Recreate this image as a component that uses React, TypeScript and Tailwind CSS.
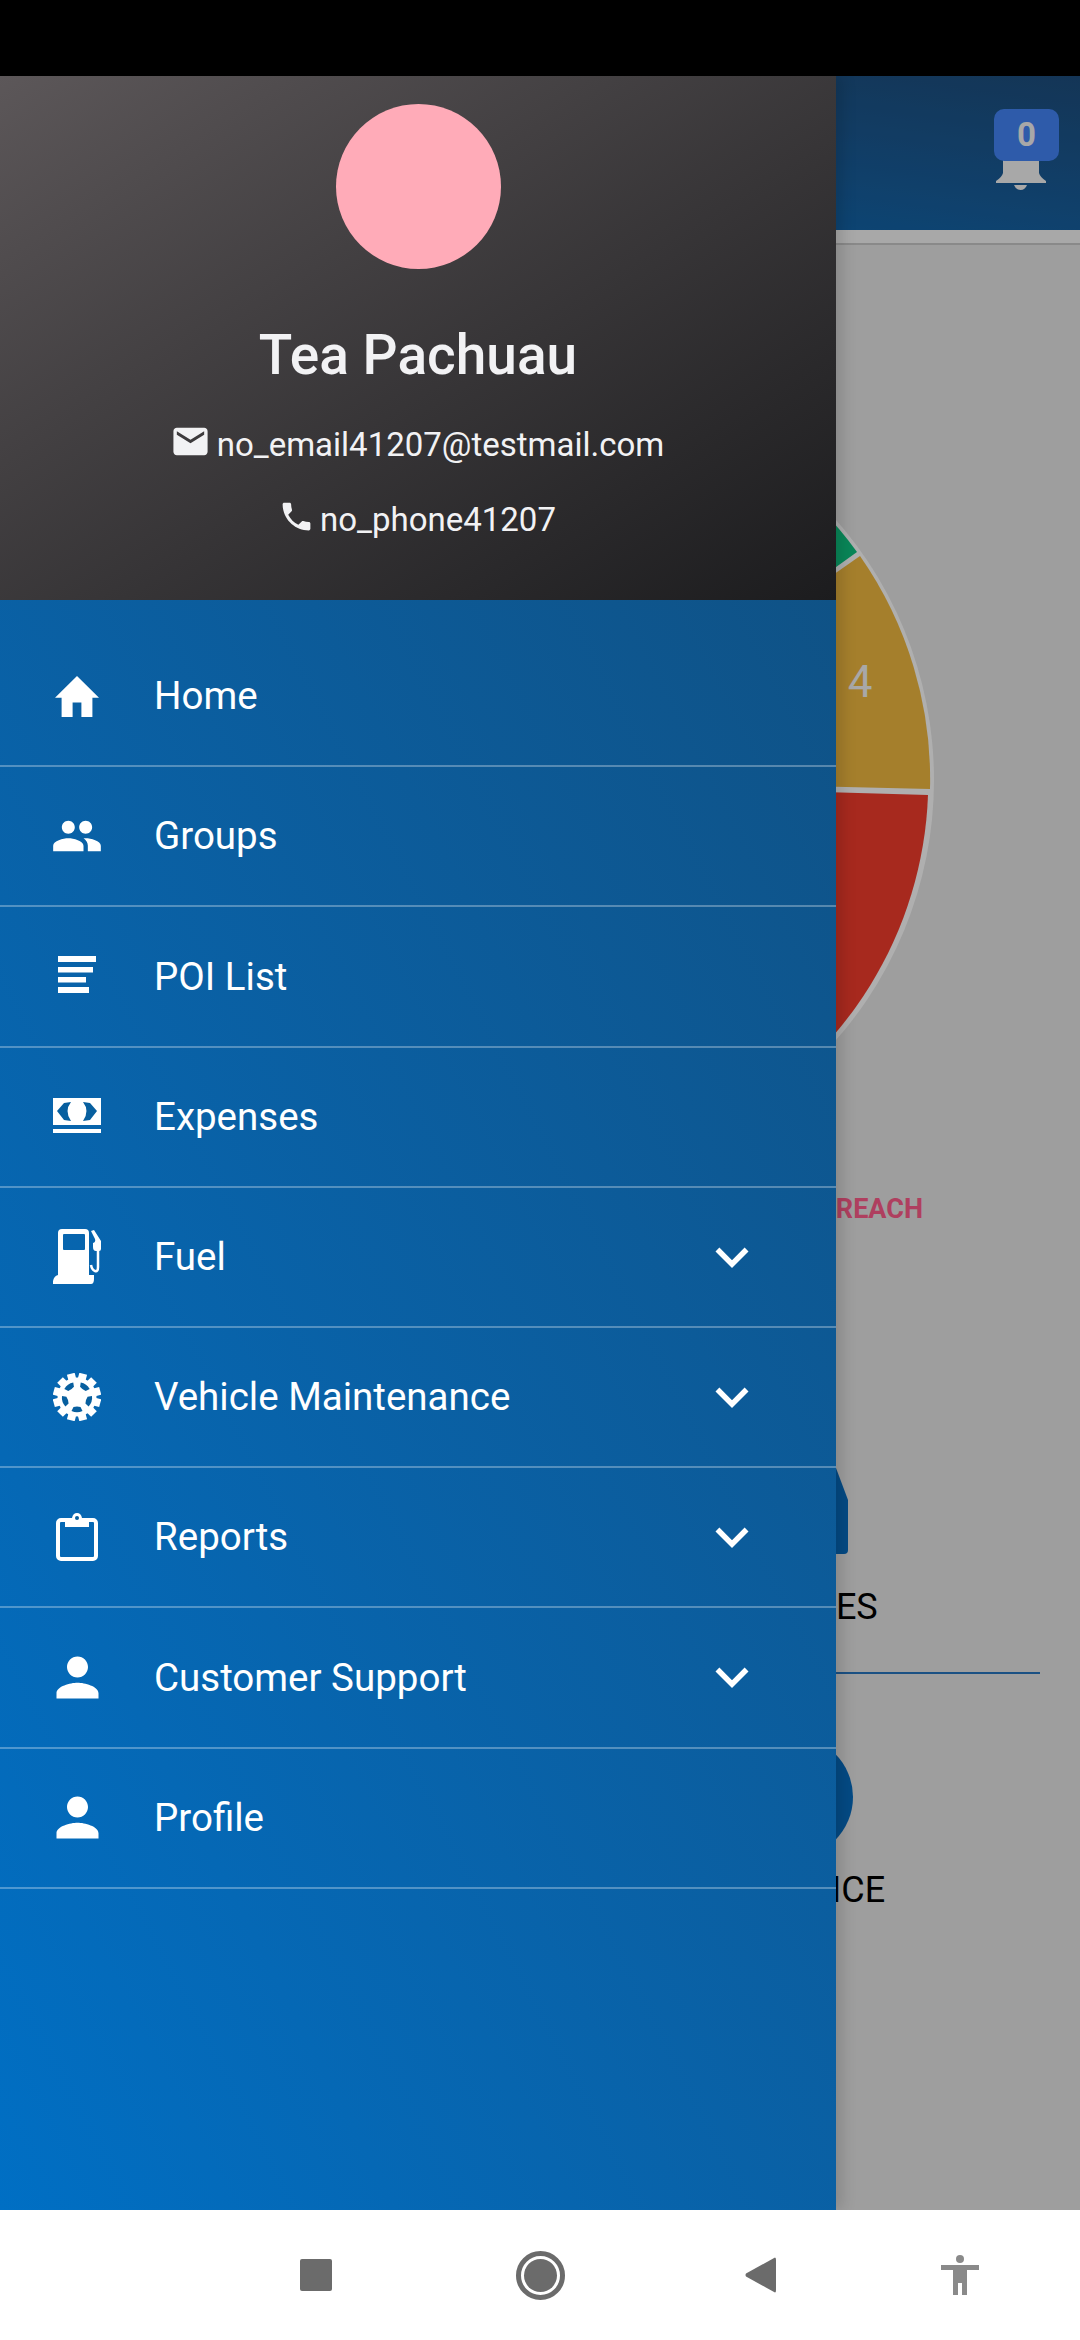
import { MdEmail, MdPhone, MdPeople, MdPerson, MdKeyboardArrowDown } from 'react-icons/md';
import type { ReactNode } from 'react';

const HomeIcon = () => (
  <svg width="44" height="41" viewBox="2 3 20 17" preserveAspectRatio="none" fill="white">
    <path d="M10 20v-6h4v6h5v-8h3L12 3 2 12h3v8z" />
  </svg>
);

const ListIcon = () => (
  <svg width="48" height="48" viewBox="0 0 48 48" fill="white">
    <rect x="5" y="4" width="38" height="6" />
    <rect x="5" y="15" width="35" height="5.5" />
    <rect x="5" y="25" width="28" height="5.5" />
    <rect x="5" y="35" width="31" height="6" />
  </svg>
);

const MoneyIcon = () => (
  <svg width="48" height="40" viewBox="0 0 48 40" fill="white">
    <rect x="0" y="1" width="48" height="27" />
    <rect x="0" y="32" width="48" height="4" />
    <path d="M18 5 L11 6 L4 14 L11 23 L18 24 Q11 14 18 5 Z" fill="#075f9f" />
    <path d="M30 5 L37 6 L44 14 L37 23 L30 24 Q37 14 30 5 Z" fill="#075f9f" />
  </svg>
);

const FuelIcon = () => (
  <svg width="48" height="56" viewBox="0 0 48 56" fill="white">
    <path fillRule="evenodd" d="M9 0 H32 Q36 0 36 4 V46 H41 V50 Q41 55 38 55 H0 V52 Q1 47 5 46 V4 Q5 0 9 0 Z M11 5 Q10 5 10 6 V20 Q10 21 11 21 H31 Q32 21 32 20 V6 Q32 5 31 5 Z" />
    <path d="M38 2 L41 1 L48 12 V20 Q48 22 46 22 H43 Q40 22 40 18 V14 Q43 13 42 10 Z" />
    <path d="M45 21 V38 Q45 43 42 42 Q39 41 38 36" fill="none" stroke="white" strokeWidth="2.5" />
  </svg>
);

const GearIcon = () => (
  <svg width="48" height="48" viewBox="-24 -24 48 48" fill="white">
    {[15, 45, 75, 105, 135, 165, 195, 225, 255, 285, 315, 345].map((a) => (
      <rect key={a} x="-4" y="-24" width="8" height="8" transform={`rotate(${a})`} />
    ))}
    <circle r="19.5" />
    {[36, 108, 180, 252, 324].map((a) => (
      <path key={a} d="M-5.5 -14 Q0 -16.5 5.5 -14 L3.5 -10 Q0 -9 -3.5 -10 Z" transform={`rotate(${a})`} fill="#075f9f" />
    ))}
  </svg>
);

const ClipboardIcon = () => (
  <svg width="42" height="48" viewBox="0 0 42 48" fill="none">
    <rect x="2" y="7" width="38" height="39" rx="3" stroke="white" strokeWidth="4" />
    <path d="M9 5 H16 Q17 0 21 0 Q25 0 26 5 H33 V14 H9 Z" fill="white" />
    <circle cx="21" cy="5" r="2" fill="#075f9f" />
  </svg>
);

const menu: { label: string; icon: ReactNode; more?: boolean }[] = [
  { label: 'Home', icon: <HomeIcon /> },
  { label: 'Groups', icon: <MdPeople size={52} color="white" /> },
  { label: 'POI List', icon: <ListIcon /> },
  { label: 'Expenses', icon: <MoneyIcon /> },
  { label: 'Fuel', icon: <FuelIcon />, more: true },
  { label: 'Vehicle Maintenance', icon: <GearIcon />, more: true },
  { label: 'Reports', icon: <ClipboardIcon />, more: true },
  { label: 'Customer Support', icon: <MdPerson size={63} color="white" />, more: true },
  { label: 'Profile', icon: <MdPerson size={63} color="white" /> },
];

function PageBehind() {
  return (
    <div className="h-full bg-[#e2e2e2] flex flex-col">
      <div className="h-[154px] shrink-0 bg-gradient-to-tr from-[#0070c0] to-[#1d4d7c] flex justify-end pt-[33px] pr-[21px]">
        <div className="relative w-[65px] h-[100px]">
          <svg className="absolute left-[2px] top-[46px]" width="50" height="40" viewBox="0 0 50 40" fill="#f1f1f1">
            <path d="M7 0 H43 V18 Q44 22 50 26 V28 H0 V26 Q6 22 7 18 Z" />
            <path d="M18 30 H31 Q29 35 24.5 35 Q20 35 18 30 Z" />
          </svg>
          <div className="absolute left-0 top-0 w-[65px] h-[52px] rounded-[10px] bg-[#4383f4] flex items-center justify-center text-[#f1f1f1] text-[33px] font-bold">0</div>
        </div>
      </div>
      <div className="h-[13px] shrink-0 bg-[#f1f1f1]" />
      <div className="h-[2px] shrink-0 bg-[#c5c5c5]" />
      <svg className="mx-auto mt-[135px] shrink-0" width="800" height="800" viewBox="-400 -400 800 800">
        <circle r="394" fill="#fbfbfb" />
        <path d="M0 4 L388 15 A389 389 0 0 1 -200 335 Z" fill="#f03b2c" />
        <path d="M0 0 L390 9 A390 390 0 0 0 320 -224 Z" fill="#edb63f" />
        <path d="M0 0 L317 -228 A390 390 0 0 0 200 -335 Z" fill="#0ec07e" />
        <text x="320" y="-83" fontSize="44" fill="#f1f1f1" textAnchor="middle">4</text>
      </svg>
      <div className="mt-[13px] pr-[157px] flex justify-end text-[27px] leading-[32px] font-bold text-[#fb5b89]">BREACH</div>
      <div className="mx-[40px] mt-[243px] grid grid-cols-2">
        <div />
        <div className="flex flex-col items-center h-[204px]">
          <svg width="116" height="86" viewBox="0 0 116 86" fill="#066abe">
            <path d="M12 0 H104 L116 32 V82 Q116 86 112 86 H4 Q0 86 0 82 V32 Z" />
          </svg>
          <div className="mt-[32px] ml-[12px] text-[36px] leading-[42px] text-black">VEHICLES</div>
        </div>
      </div>
      <div className="mx-[40px] h-[2px] bg-[#2875be]" />
      <div className="mx-[40px] mt-[62px] grid grid-cols-2">
        <div />
        <div className="flex flex-col items-center">
          <div className="ml-[4px] w-[122px] h-[122px] rounded-full bg-[#066abe]" />
          <div className="mt-[11px] ml-[50px] text-[36px] leading-[42px] text-black">SERVICE</div>
        </div>
      </div>
    </div>
  );
}

export default function App() {
  return (
    <div className="w-[1080px] h-[2340px] flex flex-col overflow-hidden bg-white font-['Roboto',sans-serif]">
      <div className="h-[76px] shrink-0 bg-black" />

      <div className="relative h-[2134px] shrink-0 overflow-hidden">
        <PageBehind />
        <div className="absolute inset-0 bg-black/30" />

        <div className="absolute left-0 top-0 bottom-0 w-[836px] flex flex-col shadow-[6px_0_14px_rgba(0,0,0,0.14)]">
          <div className="h-[524px] shrink-0 bg-gradient-to-br from-[#5c5759] to-[#1c1c1e] flex flex-col items-center pt-[28px] text-[#f2f2f4]">
            <div className="w-[165px] h-[165px] rounded-full bg-[#ffabb8]" />
            <div className="mt-[54px] text-[55px] leading-[64px] font-medium">Tea Pachuau</div>
            <div className="mt-[36px] pr-[2px] flex items-center gap-[6px] text-[33px] leading-[44px]">
              <MdEmail size={41} className="-mt-[8px] shrink-0" />
              <span>no_email41207@testmail.com</span>
            </div>
            <div className="mt-[31px] pr-[2px] flex items-center gap-[5px] text-[33px] leading-[44px]">
              <MdPhone size={37} className="-mt-[8px] shrink-0" />
              <span>no_phone41207</span>
            </div>
          </div>

          <div className="flex-1 bg-gradient-to-tr from-[#006fc4] to-[#0f5286] pt-[27px]">
            {menu.map((item) => (
              <div key={item.label} className="h-[140.2px] border-b-2 border-white/30 flex items-center text-white text-[38.5px]">
                <div className="w-[154px] shrink-0 flex justify-center">
                  <div className="w-[48px] h-[48px] flex items-center justify-center [&>svg]:shrink-0">{item.icon}</div>
                </div>
                <span className="flex-1">{item.label}</span>
                {item.more && <MdKeyboardArrowDown size={66} className="mr-[71px]" />}
              </div>
            ))}
          </div>
        </div>
      </div>

      <div className="flex-1 flex items-center bg-white">
        <div className="w-[300px]" />
        <div className="w-[32px] h-[32px] rounded-[2px] bg-[#6b6b6b]" />
        <div className="ml-[184px] w-[49px] h-[49px] rounded-full border-[5px] border-[#6b6b6b] p-[3px]">
          <div className="w-full h-full rounded-full bg-[#6b6b6b]" />
        </div>
        <svg className="ml-[180px]" width="31" height="36" viewBox="0 0 31 36" fill="#6b6b6b">
          <path d="M30 0.5 Q31 0.5 31 3 V33 Q31 35.5 30 35.5 L1 19.5 Q0 18 1 16.5 Z" />
        </svg>
        <svg className="ml-[165px]" width="38" height="40" viewBox="0 0 38 40" fill="#8a8a8a">
          <circle cx="19" cy="4" r="4" />
          <path d="M0 10 H38 V15 H26 V40 H21 V28 H17 V40 H12 V15 H0 Z" />
        </svg>
      </div>
    </div>
  );
}
